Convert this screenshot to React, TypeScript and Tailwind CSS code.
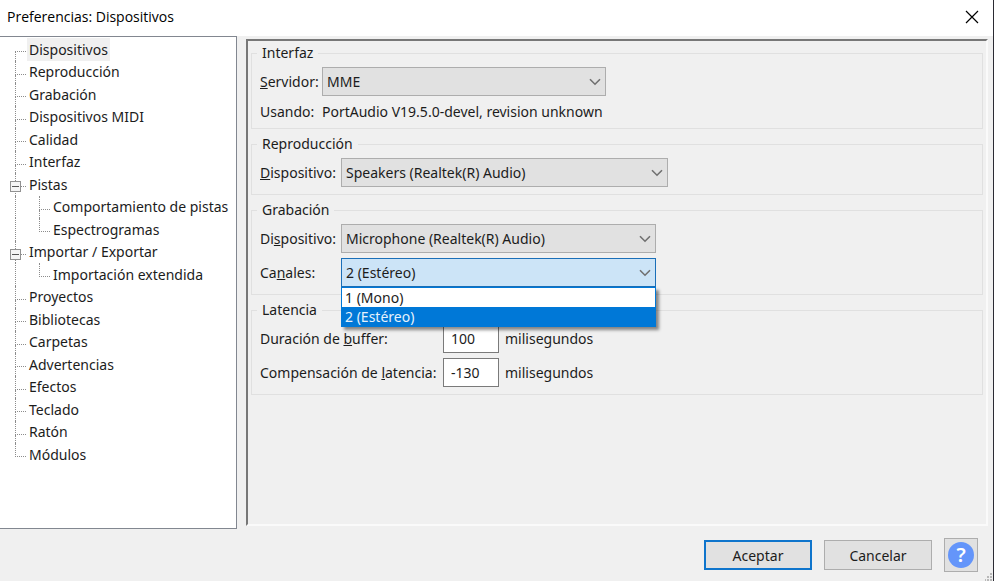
import { useState } from 'react';
import type { ReactNode } from 'react';

type TreeItem = { label: string; children?: string[] };

const TREE: TreeItem[] = [
    { label: 'Dispositivos' },
    { label: 'Reproducción' },
    { label: 'Grabación' },
    { label: 'Dispositivos MIDI' },
    { label: 'Calidad' },
    { label: 'Interfaz' },
    { label: 'Pistas', children: ['Comportamiento de pistas', 'Espectrogramas'] },
    { label: 'Importar / Exportar', children: ['Importación extendida'] },
    { label: 'Proyectos' },
    { label: 'Bibliotecas' },
    { label: 'Carpetas' },
    { label: 'Advertencias' },
    { label: 'Efectos' },
    { label: 'Teclado' },
    { label: 'Ratón' },
    { label: 'Módulos' },
];

const CHANNELS = ['1 (Mono)', '2 (Estéreo)'];

type Row = { label: string; depth: number; first: boolean; last: boolean; parentLast: boolean; open?: boolean };

function flatten(closed: string[]): Row[] {
    const rows: Row[] = [];
    TREE.forEach((item, i) => {
        const last = i === TREE.length - 1;
        const open = item.children ? !closed.includes(item.label) : undefined;
        rows.push({ label: item.label, depth: 0, first: i === 0, last, parentLast: false, open });
        if (open) {
            item.children?.forEach((child, j) => {
                rows.push({ label: child, depth: 1, first: false, last: j === item.children!.length - 1, parentLast: last });
            });
        }
    });
    return rows;
}

// dotted elbow that links a row to its siblings
function Guide({ first, last }: { first: boolean; last: boolean }) {
    return (
        <span className="flex w-[11px] shrink-0 flex-col">
            <span className={`h-[14px] border-b border-dotted border-b-[#8c8c8c] ${first ? 'pl-px' : 'border-l border-l-[#8c8c8c]'}`} />
            <span className={`flex-1 ${last ? '' : 'border-l border-dotted border-[#8c8c8c]'}`} />
        </span>
    );
}

function Tree() {
    const [selected, setSelected] = useState('Dispositivos');
    const [closed, setClosed] = useState<string[]>([]);

    const toggle = (label: string) => {
        setClosed(closed.includes(label) ? closed.filter((l) => l !== label) : [...closed, label]);
    };

    return (
        <ul className="pt-px">
            {flatten(closed).map((row) => (
                <li key={row.depth + row.label} className="relative flex h-[22px] pl-[15px] odd:h-[23px]">
                    {row.depth === 1 && (
                        <span className={`w-6 shrink-0 ${row.parentLast ? '' : 'border-l border-dotted border-[#8c8c8c]'}`} />
                    )}
                    <Guide first={row.first} last={row.last} />
                    {row.open !== undefined && (
                        <button
                            type="button"
                            aria-label={row.open ? 'Contraer' : 'Expandir'}
                            onClick={() => toggle(row.label)}
                            className="absolute top-2 left-[10px] flex h-[11px] w-[11px] items-center justify-center border border-[#919191] bg-[#f4f4f4]"
                        >
                            <svg viewBox="0 0 7 7" className="h-[7px] w-[7px]" stroke="#555" strokeWidth="1">
                                <path d="M0 3.5h7" />
                                {!row.open && <path d="M3.5 0v7" />}
                            </svg>
                        </button>
                    )}
                    <button
                        type="button"
                        onClick={() => setSelected(row.label)}
                        className={`ml-px px-[2px] leading-[22px] whitespace-nowrap ${selected === row.label ? 'bg-[#f0f0f0]' : ''}`}
                    >
                        {row.label}
                    </button>
                </li>
            ))}
        </ul>
    );
}

function Group({ title, children }: { title: string; children: ReactNode }) {
    return (
        <fieldset className="min-w-0 border border-[#e0e0e0] px-2 pb-[7px]">
            <legend className="-ml-[3px] px-[5px] leading-5">{title}</legend>
            <div className="flex flex-col gap-[5px] pt-1">{children}</div>
        </fieldset>
    );
}

function Select({ id, options, initial, width, active }: { id: string; options: string[]; initial: string; width: string; active?: boolean }) {
    const [value, setValue] = useState(initial);
    const [open, setOpen] = useState(!!active);

    const look = open ? 'border-[#1a6fb8] bg-[#cce4f7]' : 'border-[#adadad] bg-[#e1e1e1]';

    return (
        <div className={`relative ${width}`}>
            <select
                id={id}
                value={value}
                onChange={(e) => {
                    setValue(e.target.value);
                    setOpen(false);
                }}
                className={`h-[29px] w-full appearance-none border pl-1 outline-none ${look}`}
            >
                {options.map((o) => (
                    <option key={o}>{o}</option>
                ))}
            </select>
            <svg viewBox="0 0 12 8" className="pointer-events-none absolute top-[11px] right-[5px] h-2 w-3" fill="none" stroke="#707070" strokeWidth="1.6">
                <path d="M1 1.2l5 5 5-5" />
            </svg>
            {open && (
                <ul role="listbox" className="absolute top-full left-0 z-10 w-full border border-[#0078d7] bg-white shadow-[3px_3px_3px_rgba(0,0,0,0.45)]">
                    {options.map((o) => (
                        <li
                            key={o}
                            role="option"
                            aria-selected={o === value}
                            onClick={() => {
                                setValue(o);
                                setOpen(false);
                            }}
                            className={`h-[19px] pl-[3px] leading-[19px] ${o === value ? 'bg-[#0078d7] text-[#e6f2fc]' : ''}`}
                        >
                            {o}
                        </li>
                    ))}
                </ul>
            )}
        </div>
    );
}

function NumberField({ id, label, initial }: { id: string; label: ReactNode; initial: string }) {
    const [value, setValue] = useState(initial);

    return (
        <div className="flex items-center">
            <label htmlFor={id} className="w-[183px] whitespace-nowrap">{label}</label>
            <input
                id={id}
                type="text"
                value={value}
                onChange={(e) => setValue(e.target.value)}
                className="h-[29px] w-14 border border-[#7a7a7a] bg-white pl-[7px] outline-none"
            />
            <span className="ml-[6px]">milisegundos</span>
        </div>
    );
}

export default function App() {
    return (
        <div className="flex min-h-screen flex-col border-r border-[#2b2b33] bg-[#f0f0f0] font-['Noto_Sans','Open_Sans',sans-serif] text-[14px] text-[#1c1c1c]">
            <header className="flex h-9 items-center justify-between bg-white pr-[14px] pl-[7px]">
                <h1 className="pb-1 font-['Open_Sans','Noto_Sans',sans-serif] text-[14px] text-black">Preferencias: Dispositivos</h1>
                <button type="button" aria-label="Cerrar" className="pb-[2px]">
                    <svg viewBox="0 0 14 14" className="h-[14px] w-[14px]" stroke="#000" strokeWidth="1.2">
                        <path d="M1 1l12 12M13 1L1 13" />
                    </svg>
                </button>
            </header>

            <main className="flex flex-1">
                <nav className="w-[237px] shrink-0 border-y border-r border-[#828790] bg-white">
                    <Tree />
                </nav>

                <section className="my-[3px] mr-[5px] ml-[9px] flex flex-1 flex-col gap-[5px] border-2 border-t-[#777] border-r-[#fafafa] border-b-[#fafafa] border-l-[#777] px-[3px] pt-[2px]">
                    <Group title="Interfaz">
                        <div className="flex items-center">
                            <label htmlFor="host" className="w-[62px]"><u>S</u>ervidor:</label>
                            <Select id="host" options={['MME', 'Windows DirectSound', 'Windows WASAPI']} initial="MME" width="w-[284px]" />
                        </div>
                        <div className="flex h-5 items-center">
                            <span className="w-[62px]">Usando:</span>
                            <span>PortAudio V19.5.0-devel, revision unknown</span>
                        </div>
                    </Group>

                    <Group title="Reproducción">
                        <div className="flex items-center">
                            <label htmlFor="playback" className="w-[81px]"><u>D</u>ispositivo:</label>
                            <Select id="playback" options={['Speakers (Realtek(R) Audio)']} initial="Speakers (Realtek(R) Audio)" width="w-[327px]" />
                        </div>
                    </Group>

                    <Group title="Grabación">
                        <div className="flex items-center">
                            <label htmlFor="recording" className="w-[81px]">Di<u>s</u>positivo:</label>
                            <Select id="recording" options={['Microphone (Realtek(R) Audio)']} initial="Microphone (Realtek(R) Audio)" width="w-[315px]" />
                        </div>
                        <div className="flex items-center">
                            <label htmlFor="channels" className="w-[81px]">Ca<u>n</u>ales:</label>
                            <Select id="channels" options={CHANNELS} initial="2 (Estéreo)" width="w-[315px]" active />
                        </div>
                    </Group>

                    <Group title="Latencia">
                        <NumberField id="buffer" label={<>Duración de <u>b</u>uffer:</>} initial="100" />
                        <NumberField id="latency" label={<>Compensación de <u>l</u>atencia:</>} initial="-130" />
                    </Group>
                </section>
            </main>

            <footer className="relative flex h-[52px] items-center justify-end gap-3 pr-[15px]">
                <button type="button" className="h-[30px] w-[108px] border-2 border-[#0f75cc] bg-[#e1e1e1]">Aceptar</button>
                <button type="button" className="h-[30px] w-[108px] border border-[#adadad] bg-[#e1e1e1]">Cancelar</button>
                <button type="button" aria-label="Ayuda" className="flex h-[34px] w-[34px] items-center justify-center border border-[#adadad] bg-[#e1e1e1]">
                    <span className="flex h-[26px] w-[26px] items-center justify-center rounded-full bg-[#6495fa] text-[20px] leading-[26px] font-semibold text-white">?</span>
                </button>
                <svg viewBox="0 0 8 8" className="absolute right-0 bottom-0 h-2 w-2" fill="#b8b8b8">
                    <path d="M5 0h2v2H5zM2 3h2v2H2zM5 3h2v2H5zM0 6h1v2H0zM2 6h2v2H2zM5 6h2v2H5z" />
                </svg>
            </footer>
        </div>
    );
}
